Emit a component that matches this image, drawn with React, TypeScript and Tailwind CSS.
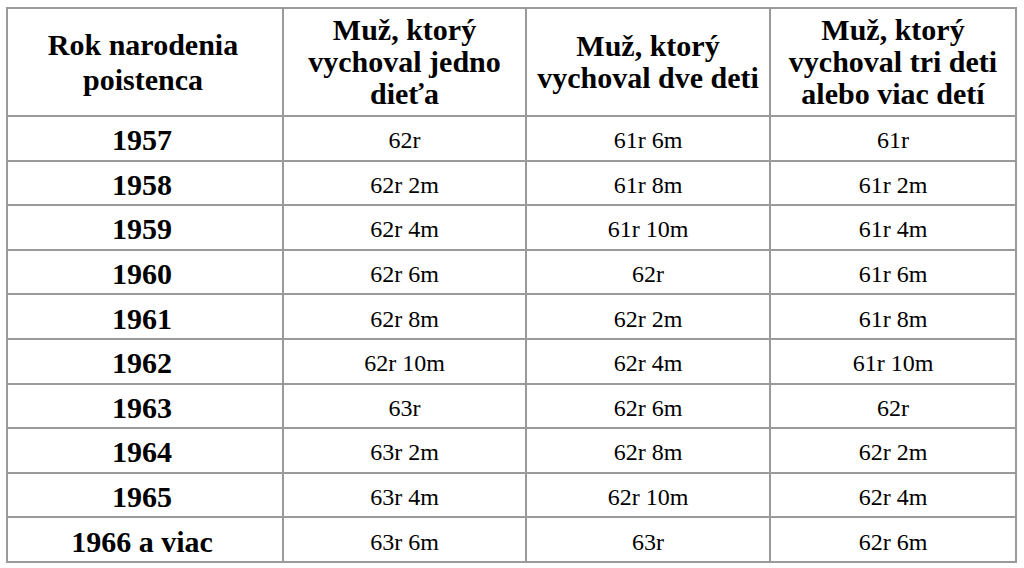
import React from "react";

const rows: [string, string, string, string][] = [
  ["1957", "62r", "61r 6m", "61r"],
  ["1958", "62r 2m", "61r 8m", "61r 2m"],
  ["1959", "62r 4m", "61r 10m", "61r 4m"],
  ["1960", "62r 6m", "62r", "61r 6m"],
  ["1961", "62r 8m", "62r 2m", "61r 8m"],
  ["1962", "62r 10m", "62r 4m", "61r 10m"],
  ["1963", "63r", "62r 6m", "62r"],
  ["1964", "63r 2m", "62r 8m", "62r 2m"],
  ["1965", "63r 4m", "62r 10m", "62r 4m"],
  ["1966 a viac", "63r 6m", "63r", "62r 6m"],
];

export default function App() {
  return (
    <div className="w-[1024px] h-[568px] bg-white pt-[7px] pl-[6px] overflow-hidden text-black [font-family:'Liberation_Serif','Times_New_Roman',serif]">
      <table className="table-fixed border-collapse w-[1009px]">
        <colgroup>
          <col className="w-[276px]" />
          <col className="w-[243px]" />
          <col className="w-[244px]" />
          <col className="w-[246px]" />
        </colgroup>
        <thead>
          <tr className="h-[108px]">
            <th className="border-2 border-[#9a9a9a] font-bold text-[30px] leading-[35px] text-center align-middle p-0 pr-[4px]">
              Rok narodenia
              <br />
              poistenca
            </th>
            <th className="border-2 border-[#9a9a9a] font-bold text-[30px] leading-[32px] text-center align-middle p-0">
              Muž, ktorý
              <br />
              vychoval jedno
              <br />
              dieťa
            </th>
            <th className="border-2 border-[#9a9a9a] font-bold text-[30px] leading-[32px] text-center align-middle p-0">
              Muž, ktorý
              <br />
              vychoval dve deti
            </th>
            <th className="border-2 border-[#9a9a9a] font-bold text-[30px] leading-[32px] text-center align-middle p-0">
              Muž, ktorý
              <br />
              vychoval tri deti
              <br />
              alebo viac detí
            </th>
          </tr>
        </thead>
        <tbody>
          {rows.map((r) => (
            <tr key={r[0]} className="h-[44.6px]">
              <td className="border-2 border-[#9a9a9a] font-bold text-[30px] leading-none text-center align-middle p-0 pt-[4px] pr-[6px]">
                {r[0]}
              </td>
              <td className="border-2 border-[#9a9a9a] text-[24px] leading-none text-center align-middle p-0 pt-[4px]">
                {r[1]}
              </td>
              <td className="border-2 border-[#9a9a9a] text-[24px] leading-none text-center align-middle p-0 pt-[4px]">
                {r[2]}
              </td>
              <td className="border-2 border-[#9a9a9a] text-[24px] leading-none text-center align-middle p-0 pt-[4px]">
                {r[3]}
              </td>
            </tr>
          ))}
        </tbody>
      </table>
    </div>
  );
}
